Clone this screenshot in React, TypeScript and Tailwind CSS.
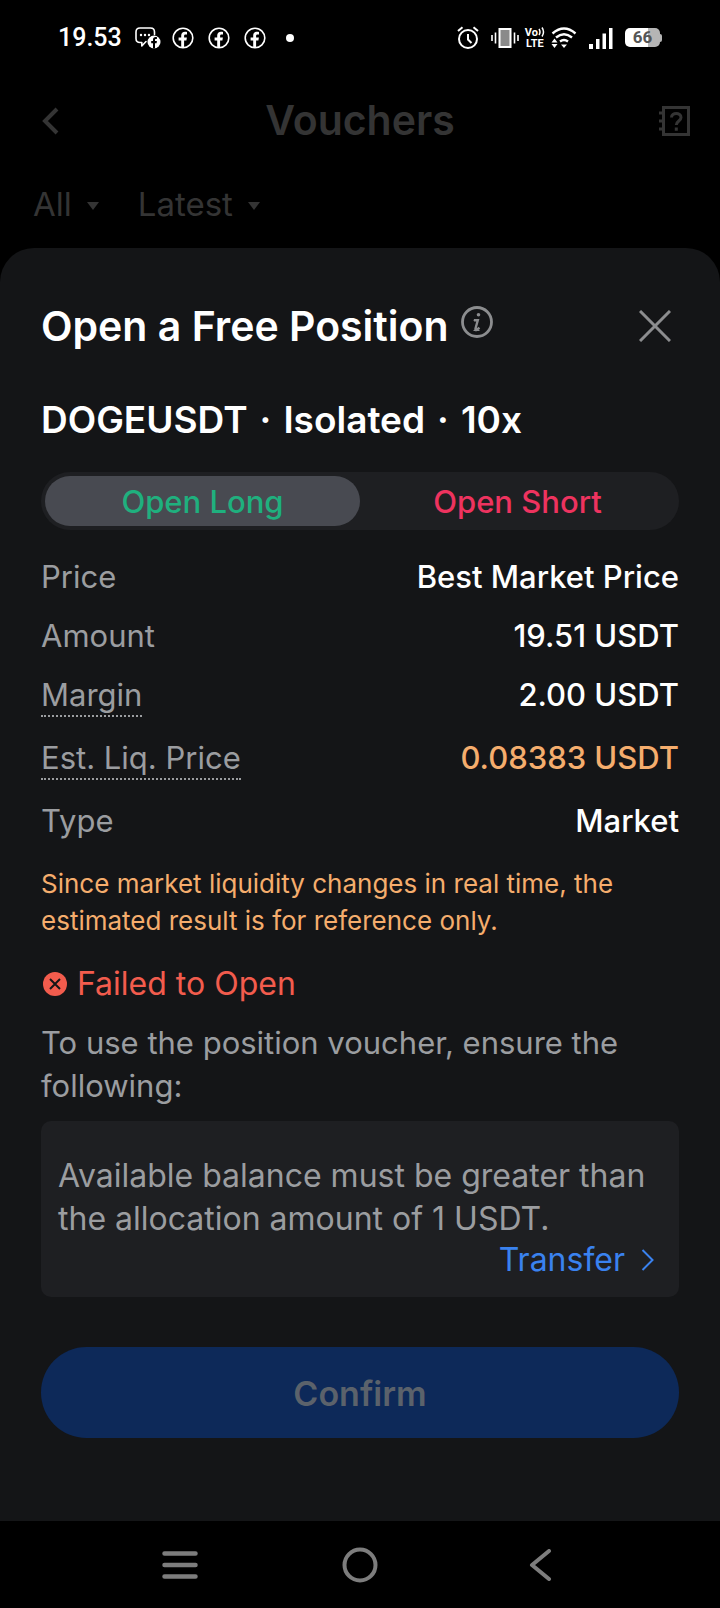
import { FC, ReactNode, useState } from "react";

const details = [
  { label: "Price", value: "Best Market Price", hint: false, warn: false },
  { label: "Amount", value: "19.51 USDT", hint: false, warn: false },
  { label: "Margin", value: "2.00 USDT", hint: true, warn: false },
  { label: "Est. Liq. Price", value: "0.08383 USDT", hint: true, warn: true },
  { label: "Type", value: "Market", hint: false, warn: false },
];

const FacebookIcon: FC = () => (
  <svg width="22" height="22" viewBox="0 0 22 22" fill="none">
    <circle cx="11" cy="11" r="9.8" stroke="white" strokeWidth="1.6" />
    <path
      d="M9.2 21v-7.6H6.6v-3h2.6V8.6c0-2.6 1.5-3.9 3.8-3.9.9 0 1.6.1 2 .2v2.6h-1.4c-1.2 0-1.5.7-1.5 1.5v1.4h2.8l-.5 3h-2.3V21z"
      fill="white"
    />
  </svg>
);

const StatusBar: FC = () => (
  <div className="flex h-[75px] items-center justify-between px-[58px]">
    <div className="flex items-center">
      <span className="w-[77px] font-[Roboto,sans-serif] text-[25px] font-medium text-white">
        19.53
      </span>
      <svg width="26" height="22" viewBox="0 0 26 22" fill="none" className="mr-[11px]">
        <path
          d="M11 14.5 6.8 19v-3.5H5Q1 15.5 1 11.5V5Q1 1 5 1h10.5q4 0 4 4v2.5"
          stroke="white"
          strokeWidth="1.6"
          strokeLinejoin="round"
          strokeLinecap="round"
        />
        <circle cx="6" cy="8" r="1.2" fill="white" />
        <circle cx="10" cy="8" r="1.2" fill="white" />
        <circle cx="14" cy="8" r="1.2" fill="white" />
        <circle cx="19" cy="15" r="6.5" fill="white" />
        <path
          d="M18 21.5v-5.3h-1.8V14H18v-1.2c0-1.9 1-2.8 2.6-2.8l1.3.1v1.9H21c-.8 0-1 .4-1 1V14h1.9l-.3 2.2H20v5.2z"
          fill="black"
        />
      </svg>
      <div className="flex items-center gap-[14px]">
        <FacebookIcon />
        <FacebookIcon />
        <FacebookIcon />
      </div>
      <span className="ml-5 size-2 rounded-full bg-white" />
    </div>

    <div className="flex items-center">
      {/* Alarm */}
      <svg width="22" height="24" viewBox="0 0 22 24" fill="none" stroke="white" strokeWidth="2" className="mr-3">
        <circle cx="11" cy="13" r="9" />
        <path d="M11 8v5.5l3.5 3.5M1 5l4.5-3.8M21 5l-4.5-3.8" />
      </svg>
      {/* Vibrate */}
      <svg width="28" height="22" viewBox="0 0 28 22" fill="none" className="mr-[6px]">
        <rect x="8.5" y="2" width="11" height="18" fill="#8a8a8a" stroke="white" strokeWidth="2" />
        <path d="M1 8v6M4.5 5.5v11M23.5 5.5v11M27 8v6" stroke="white" strokeWidth="1.6" />
      </svg>
      <div className="mr-[6px] flex flex-col items-center font-[Roboto,sans-serif] text-[11px] font-bold leading-[11px] text-white">
        <span className="flex items-center">
          Vo
          <svg width="7" height="10" viewBox="0 0 7 10" fill="none" stroke="white" strokeWidth="1.5">
            <path d="M1 2q2 3 0 6M4 .5q3 4.500 0 9" />
          </svg>
        </span>
        <span>LTE</span>
      </div>
      {/* Wi-Fi */}
      <svg width="26" height="22" viewBox="0 0 26 22" fill="none" className="mr-3">
        <path
          d="M1.5 6.500Q13-3.500 24.500 6.500M5 10.500q8-6.500 16 0M9 14.500q4-3 8 0"
          stroke="white"
          strokeWidth="2.4"
        />
        <path d="M10 17.500h6L13 21zM.5 15.500h6l-3-4zM.5 17h6l-3 4z" fill="white" />
      </svg>
      {/* Signal */}
      <svg width="24" height="22" viewBox="0 0 24 22" fill="white" className="mr-3">
        <path d="M0 17h4v5H0zM7 12h3.5v10H7zM13.5 6.5H17V22h-3.5zM20 1h3.5v21H20z" />
      </svg>
      {/* Battery */}
      <div className="flex items-center">
        <span className="flex h-[19px] w-[35px] items-center justify-center rounded-[5px] bg-linear-to-r from-white from-66% to-[#b5b5b5] to-66% font-[Roboto,sans-serif] text-[17px] font-bold text-[#555]">
          66
        </span>
        <span className="h-2 w-[2px] rounded-r-sm bg-[#b5b5b5]" />
      </div>
    </div>
  </div>
);

const FilterButton: FC<{ children: ReactNode }> = ({ children }) => (
  <button className="flex items-center gap-[15px] text-[33px] leading-10">
    {children}
    <svg width="12" height="8" viewBox="0 0 12 8" fill="currentColor" className="mt-1">
      <path d="M0 0h12L6 8z" />
    </svg>
  </button>
);

const PageHeader: FC = () => (
  <header className="text-[#343434]">
    <div className="grid h-[91px] grid-cols-[1fr_auto_1fr] items-center px-[29px]">
      <button aria-label="Back" className="pl-3">
        <svg width="18" height="28" viewBox="0 0 18 28" fill="none" stroke="currentColor" strokeWidth="4">
          <path d="M16 2 4 14l12 12" />
        </svg>
      </button>
      <h1 className="text-[41px] font-semibold">Vouchers</h1>
      <button aria-label="Help" className="justify-self-end">
        <svg width="32" height="32" viewBox="0 0 32 32" fill="none" stroke="currentColor" strokeWidth="3">
          <rect x="4.5" y="2.5" width="25" height="27" />
          <path d="M0 8h5M0 16h5M0 24h5" />
          <path d="M12.5 12.500c0-5.500 9.500-5.500 9.500 0 0 3.500-4.700 3.500-4.700 7.500M17.300 22.500v3.200" />
        </svg>
      </button>
    </div>
    <div className="flex h-[82px] items-center gap-[39px] px-[33px] pb-[6px]">
      <FilterButton>All</FilterButton>
      <FilterButton>Latest</FilterButton>
    </div>
  </header>
);

const SideTabs: FC = () => {
  const [side, setSide] = useState("long");

  return (
    <div role="tablist" className="mt-7 flex h-[58px] rounded-full bg-[#1e1f22] p-1">
      <button
        role="tab"
        aria-selected={side === "long"}
        onClick={() => setSide("long")}
        className={`flex-1 rounded-full pt-[2px] text-[31px] font-medium leading-10 text-[#1fb07e] ${
          side === "long" ? "bg-[#484a51]" : ""
        }`}
      >
        Open Long
      </button>
      <button
        role="tab"
        aria-selected={side === "short"}
        onClick={() => setSide("short")}
        className={`flex-1 rounded-full pt-[2px] text-[31px] font-medium leading-10 text-[#ee335f] ${
          side === "short" ? "bg-[#484a51]" : ""
        }`}
      >
        Open Short
      </button>
    </div>
  );
};

const PositionSheet: FC = () => (
  <main className="flex-1 rounded-t-[34px] bg-[#141517] px-[41px] pt-12">
    <div className="flex items-center justify-between">
      <div className="flex items-center gap-3">
        <h2 className="text-[41px] font-semibold leading-[60px] text-white">
          Open a Free Position
        </h2>
        <button aria-label="About free positions" className="mb-2">
          <svg width="32" height="32" viewBox="0 0 32 32" fill="none" stroke="#8c8d8f">
            <circle cx="16" cy="16" r="14.5" strokeWidth="2.8" />
            <circle cx="17.5" cy="8.8" r="1.8" fill="#8c8d8f" stroke="none" />
            <path d="M12.5 14.3h1.8M12.5 24.500h6" strokeWidth="1" />
            <path d="M13 14.300h3.800l-2.300 8.200q-.4 2 1.200 1.300l2.800-2" strokeWidth="2.4" />
          </svg>
        </button>
      </div>
      <button aria-label="Close" className="mr-2">
        <svg width="32" height="32" viewBox="0 0 32 32" stroke="#8c8d8f" strokeWidth="3">
          <path d="m1 1 30 30M31 1 1 31" />
        </svg>
      </button>
    </div>

    <p className="mt-10 flex gap-3 text-[37px] font-semibold leading-12 text-white">
      <span>DOGEUSDT</span>
      <span>·</span>
      <span>Isolated</span>
      <span>·</span>
      <span>10x</span>
    </p>

    <SideTabs />

    <dl className="mt-[27px] flex flex-col gap-[19px] text-[31px] leading-10">
      {details.map(({ label, value, hint, warn }) => (
        <div key={label} className="flex items-start justify-between">
          <dt
            className={`text-[#9b9da0] ${
              hint ? "mb-[2px] border-b-2 border-dotted border-[#9b9da0]" : ""
            }`}
          >
            {label}
          </dt>
          <dd className={`font-medium ${warn ? "text-[#f5ad6d]" : "text-white"}`}>
            {value}
          </dd>
        </div>
      ))}
    </dl>

    <p className="mt-6 text-[26px] leading-[37px] text-[#f5ad6d]">
      Since market liquidity changes in real time, the estimated result is for
      reference only.
    </p>

    <div className="mt-6 flex items-center gap-[10px] pl-[2px] text-[32px] leading-[42px] text-[#f25c4d]">
      <svg width="24" height="24" viewBox="0 0 24 24">
        <circle cx="12" cy="12" r="12" fill="currentColor" />
        <path d="m7 7 10 10M17 7 7 17" stroke="#141517" strokeWidth="2" />
      </svg>
      <span>Failed to Open</span>
    </div>

    <p className="mt-4 text-[31px] leading-[43px] text-[#9b9da0]">
      To use the position voucher, ensure the following:
    </p>

    <div className="mt-[14px] rounded-[10px] bg-[#1e1f22] px-[17px] pb-[17px] pt-[33px] text-[32px]">
      <p className="leading-[43px] text-[#9b9da0]">
        Available balance must be greater than the allocation amount of 1 USDT.
      </p>
      <a
        href="#transfer"
        className="flex items-center justify-end gap-4 pr-[7px] leading-10 text-[#3a82ef]"
      >
        Transfer
        <svg width="14" height="22" viewBox="0 0 14 22" fill="none" stroke="currentColor" strokeWidth="2">
          <path d="m1.5 1 10 10-10 10" />
        </svg>
      </a>
    </div>

    <button
      disabled
      className="mt-[50px] mb-[80px] h-[91px] w-full rounded-full bg-[#0d2959] pt-[2px] text-[34px] font-semibold text-[#5b626b]"
    >
      Confirm
    </button>
  </main>
);

const SystemNav: FC = () => (
  <nav className="grid h-[87px] grid-cols-[1fr_auto_1fr] items-center gap-36 text-[#7d7d7d]">
    <button aria-label="Recent apps" className="justify-self-end">
      <svg width="36" height="28" viewBox="0 0 36 28" stroke="currentColor" strokeWidth="4.5" strokeLinecap="round">
        <path d="M2.5 2.5h31M2.5 14h31M2.5 25.5h31" />
      </svg>
    </button>
    <button aria-label="Home">
      <svg width="36" height="36" viewBox="0 0 36 36" fill="none" stroke="currentColor" strokeWidth="4">
        <circle cx="18" cy="18" r="15.5" />
      </svg>
    </button>
    <button aria-label="Back">
      <svg width="36" height="32" viewBox="0 0 36 32" fill="none" stroke="currentColor" strokeWidth="4" strokeLinecap="round" strokeLinejoin="round">
        <path d="M27 2 10 16l17 14" />
      </svg>
    </button>
  </nav>
);

const App: FC = () => (
  <div className="flex min-h-screen flex-col bg-black font-[Inter,'Liberation_Sans',sans-serif]">
    <StatusBar />
    <PageHeader />
    <PositionSheet />
    <SystemNav />
  </div>
);

export default App;
